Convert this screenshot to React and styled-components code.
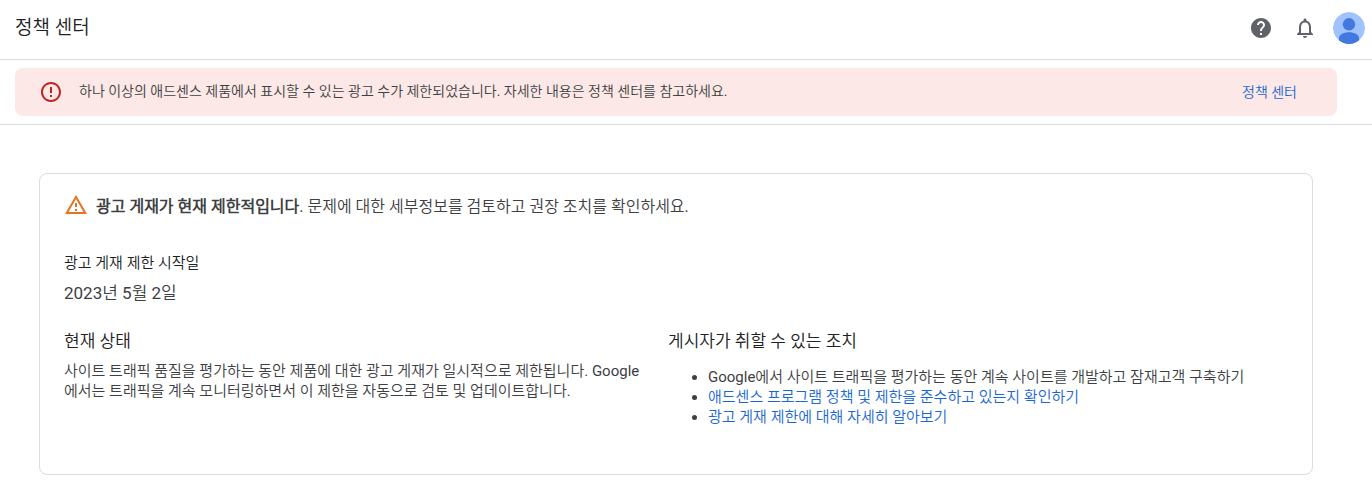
import styled, { createGlobalStyle } from 'styled-components';
import { MdErrorOutline, MdHelp, MdNotificationsNone } from 'react-icons/md';

const GlobalStyle = createGlobalStyle`
    * {
        box-sizing: border-box;
    }

    body {
        margin: 0;
        background-color: #fff;
        color: #3c4043;
        font-family: Roboto, "Noto Sans CJK KR DemiLight", "Noto Sans CJK KR", sans-serif;
        font-size: 15px;
        line-height: 20px;
    }
`;

const Header = styled.header`
    display: flex;
    align-items: center;
    justify-content: space-between;
    height: 60px;
    padding: 0 7px 4px 15px;
    border-bottom: 1px solid #dadce0;
`;

const Title = styled.h1`
    margin: 0;
    color: #202124;
    font-size: 19px;
    font-weight: 400;
    line-height: 24px;
`;

const Actions = styled.div`
    display: flex;
    align-items: center;
    gap: 16px;
`;

const IconButton = styled.button`
    display: flex;
    padding: 0 2px;
    border: none;
    background: none;
    color: #5f6368;
    font-size: 24px;
    cursor: pointer;
`;

const AvatarButton = styled.button`
    display: flex;
    width: 32px;
    height: 32px;
    margin-left: -2px;
    padding: 0;
    border: none;
    border-radius: 50%;
    background: none;
    overflow: hidden;
    cursor: pointer;
`;

const BannerBar = styled.div`
    padding: 8px 35px 8px 15px;
    border-bottom: 1px solid #dadce0;
`;

const Banner = styled.div`
    display: flex;
    align-items: center;
    min-height: 48px;
    padding: 0 40px 0 24px;
    border-radius: 8px;
    background-color: #fce8e6;
    font-size: 14px;
`;

const BannerIcon = styled(MdErrorOutline)`
    flex: none;
    color: #c5221f;
    font-size: 24px;
`;

const BannerText = styled.p`
    flex: 1;
    margin: 0;
    padding: 0 16px 2px;
`;

const Link = styled.a`
    color: #1967d2;
    text-decoration: none;
`;

const Card = styled.main`
    margin: 48px 59px 19px 39px;
    padding: 19px 40px 47px 24px;
    border: 1px solid #dadce0;
    border-radius: 8px;
`;

const Summary = styled.div`
    display: flex;
    align-items: flex-start;
    gap: 8px;
    font-size: 16px;
    line-height: 24px;
`;

const WarningIcon = styled.svg`
    flex: none;
    width: 24px;
    height: 24px;
    fill: #e37424;
`;

const SummaryText = styled.p`
    margin: 0;
    padding-top: 2px;
`;

const DateBlock = styled.dl`
    margin: 34px 0 0;
`;

const DateLabel = styled.dt`
    color: #202124;
`;

const DateValue = styled.dd`
    margin: 8px 0 0;
    font-size: 17px;
    line-height: 24px;
`;

const Columns = styled.div`
    display: grid;
    grid-template-columns: 1fr 1fr;
    margin-top: 24px;
`;

const Heading = styled.h2`
    margin: 0;
    color: #202124;
    font-size: 17px;
    font-weight: 400;
    line-height: 24px;
`;

const Text = styled.p`
    margin: 8px 16px 0 0;
`;

const List = styled.ul`
    margin: 14px 0 0;
    padding-left: 40px;
`;

function Avatar() {
    return (
        <svg width="32" height="32" viewBox="0 0 32 32" aria-hidden="true">
            <circle cx="16" cy="16" r="16" fill="#a0c3ff" />
            <circle cx="16" cy="12.3" r="6.2" fill="#4379df" />
            <path d="M6 26.2c0-3.700 4.500-5.900 10-5.900s10 2.200 10 5.900v5.800H6z" fill="#4379df" />
        </svg>
    );
}

export default function App() {
    return (
        <>
            <GlobalStyle />
            <Header>
                <Title>정책 센터</Title>
                <Actions>
                    <IconButton aria-label="도움말"><MdHelp /></IconButton>
                    <IconButton aria-label="알림"><MdNotificationsNone /></IconButton>
                    <AvatarButton aria-label="계정"><Avatar /></AvatarButton>
                </Actions>
            </Header>
            <BannerBar>
                <Banner>
                    <BannerIcon />
                    <BannerText>하나 이상의 애드센스 제품에서 표시할 수 있는 광고 수가 제한되었습니다. 자세한 내용은 정책 센터를 참고하세요.</BannerText>
                    <Link href="#policy">정책 센터</Link>
                </Banner>
            </BannerBar>
            <Card>
                <Summary>
                    <WarningIcon viewBox="0 0 24 24" aria-hidden="true">
                        <path d="M12 5.990L19.530 19H4.470L12 5.990M12 2L1 21h22L12 2zm1 14h-2v2h2v-2zm0-6h-2v4h2v-4z" />
                    </WarningIcon>
                    <SummaryText><strong>광고 게재가 현재 제한적입니다</strong>. 문제에 대한 세부정보를 검토하고 권장 조치를 확인하세요.</SummaryText>
                </Summary>
                <DateBlock>
                    <DateLabel>광고 게재 제한 시작일</DateLabel>
                    <DateValue>2023년 5월 2일</DateValue>
                </DateBlock>
                <Columns>
                    <section>
                        <Heading>현재 상태</Heading>
                        <Text>사이트 트래픽 품질을 평가하는 동안 제품에 대한 광고 게재가 일시적으로 제한됩니다. Google에서는 트래픽을 계속 모니터링하면서 이 제한을 자동으로 검토 및 업데이트합니다.</Text>
                    </section>
                    <section>
                        <Heading>게시자가 취할 수 있는 조치</Heading>
                        <List>
                            <li>Google에서 사이트 트래픽을 평가하는 동안 계속 사이트를 개발하고 잠재고객 구축하기</li>
                            <li><Link href="#program-policies">애드센스 프로그램 정책 및 제한을 준수하고 있는지 확인하기</Link></li>
                            <li><Link href="#ad-limits">광고 게재 제한에 대해 자세히 알아보기</Link></li>
                        </List>
                    </section>
                </Columns>
            </Card>
        </>
    );
}
